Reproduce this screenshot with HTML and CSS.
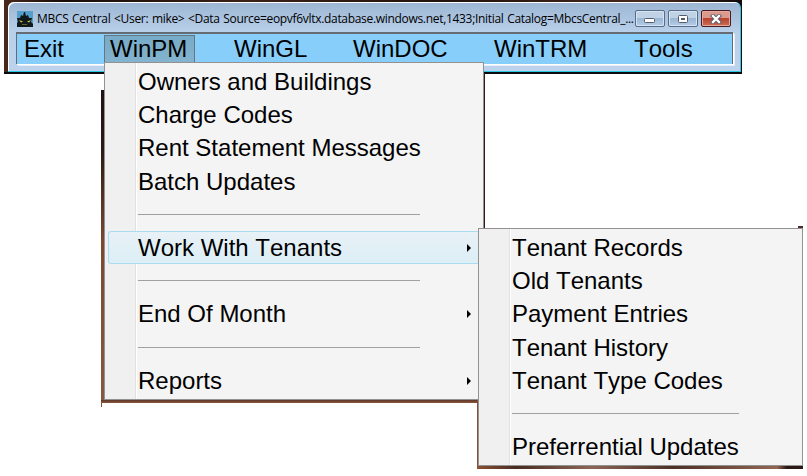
FILE: index.html
```html
<!DOCTYPE html>
<html lang="en">
<head>
<meta charset="utf-8">
<title>MBCS Central</title>
<link rel="stylesheet" href="styles.css">
</head>
<body>
<div class="backdrop">
  <div class="window">
    <header class="titlebar">
      <svg class="app-icon" width="16" height="16" viewBox="0 0 16 16">
        <rect width="16" height="16" fill="#559dca"/>
        <path d="M0 16V12l1-1-1-4 3 0 1-3 2 1 1-4h1l1 4 2-1 1 3 3 0-1 4 2 2v3z" fill="#10191c"/>
        <path d="M2 9l4 1.500-2 1zM14 9l-4 1.500 2 1z" fill="#d7c94b"/>
        <path d="M5 13.500h5" stroke="#61662f"/>
      </svg>
      <span class="title">MBCS Central &lt;User: mike&gt; &lt;Data Source=eopvf6vltx.database.windows.net,1433;Initial Catalog=MbcsCentral_...</span>
      <div class="controls">
        <span class="control"><svg class="minimize" width="12" height="6"><rect x=".5" y=".5" width="10" height="4" rx="1" fill="#fff" stroke="#555b6a"/></svg></span>
        <span class="control"><svg width="12" height="10"><rect x="1.500" y="1.500" width="9" height="7" rx="1" fill="#fff" stroke="#555b6a"/><rect x="4.500" y="4.500" width="3" height="1" fill="#9bb8d5" stroke="#555b6a"/></svg></span>
        <span class="control close"><svg width="12" height="10"><path d="M3 2l6 6M9 2l-6 6" stroke="#555b6a" stroke-width="4.200" stroke-linecap="square"/><path d="M3 2l6 6M9 2l-6 6" stroke="#fff" stroke-width="2.400" stroke-linecap="square"/></svg></span>
      </div>
    </header>
    <nav class="menubar">
      <span class="menu exit">Exit</span>
      <span class="menu open">WinPM</span>
      <span class="menu gl">WinGL</span>
      <span class="menu doc">WinDOC</span>
      <span class="menu trm">WinTRM</span>
      <span class="menu">Tools</span>
    </nav>
  </div>
</div>
<div class="edge edge-left"></div>
<div class="edge edge-foot"></div>
<div class="edge edge-bottom"></div>
<div class="edge edge-right"></div>
<div class="popup main">
  <div class="item">Owners and Buildings</div>
  <div class="item">Charge Codes</div>
  <div class="item">Rent Statement Messages</div>
  <div class="item">Batch Updates</div>
  <div class="sep"></div>
  <div class="item parent active">Work With Tenants</div>
  <div class="sep"></div>
  <div class="item parent">End Of Month</div>
  <div class="sep"></div>
  <div class="item parent">Reports</div>
</div>
<div class="edge edge-sub-left"></div>
<div class="edge edge-sub-bottom"></div>
<div class="edge edge-corner"></div>
<div class="popup sub">
  <div class="item">Tenant Records</div>
  <div class="item">Old Tenants</div>
  <div class="item">Payment Entries</div>
  <div class="item">Tenant History</div>
  <div class="item">Tenant Type Codes</div>
  <div class="sep"></div>
  <div class="item">Preferrential Updates</div>
</div>
</body>
</html>
```
FILE: styles.css
```css
* { box-sizing: border-box; }
body {
  margin: 0;
  width: 807px;
  height: 476px;
  overflow: hidden;
  position: relative;
  background: #fff;
  color: #000;
  font: 24px/33px "Liberation Sans", Arial, sans-serif;
  font-kerning: none;
  white-space: nowrap;
}
.backdrop {
  margin-left: 4px;
  width: 738px;
  height: 74px;
  padding: 2px 0 0 4px;
  background: linear-gradient(90deg, #49291d, #160c08 8%, #3b2116 33%, #20120c 60%, #49291d 88%, #100b0b);
  border-bottom: 2px solid #090b10;
}
.window {
  width: 733px;
  height: 70px;
  padding: 0 8px;
  border: solid #29c9e5;
  border-width: 0 1px 1px 0;
  border-radius: 6px 6px 0 0;
  box-shadow: inset 1px 1px #fff;
  background: linear-gradient(#9bb5d2, #b9d0ea 30px, #bdd3ed);
}
.titlebar {
  display: flex;
  align-items: center;
  height: 30px;
  padding-top: 4px;
}
.app-icon { flex: none; margin: 0 4px 0 1px; }
.title {
  width: 598px;
  font: 12px/18px "Open Sans", sans-serif;
  letter-spacing: -0.31px;
  word-spacing: 0.8px;
}
.controls { display: flex; gap: 3px; margin-top: -1px; }
.control {
  display: flex;
  align-items: center;
  justify-content: center;
  width: 30px;
  height: 17px;
  border: 1px solid #596b86;
  border-radius: 2px;
  box-shadow: inset 0 0 0 1px #d5e3f2;
  background: linear-gradient(#bfd2e6 50%, #9bb7d3 50%, #b4cde7);
}
.minimize { margin-top: 4px; }
.close {
  border-color: #461b21;
  box-shadow: inset 0 0 0 1px #e5a99f;
  background: linear-gradient(#dc9a8d 50%, #b94331 50%, #cb6d50);
}
.menubar {
  display: flex;
  width: 717px;
  height: 32px;
  padding: 1px 0 0 7px;
  background: #87cefa;
  border: 1px solid #666c74;
  border-width: 2px 1px 0 1px;
  box-shadow: 1px 1px #fff, 2px 2px #e6effa;
}
.menu { height: 28px; line-height: 27px; }
.exit { width: 80px; }
.open {
  width: 91px;
  padding-left: 5px;
  line-height: 25px;
  border: 1px solid #68747e;
  background: linear-gradient(#77abc9, #83b3ce);
}
.gl { width: 119px; margin-left: 39px; }
.doc { width: 141px; }
.trm { width: 140px; }
.popup {
  position: absolute;
  border: 1px solid #929292;
  padding: 2px 2px;
}
.main {
  left: 104px;
  top: 62px;
  width: 380px;
  height: 338px;
  background: linear-gradient(90deg, #f0f0f0 30px, #e1e1e1 30px 31px, #fff 31px 32px, #f4f4f4 32px);
}
.sub {
  left: 478px;
  top: 228px;
  width: 325px;
  height: 238px;
  background: linear-gradient(90deg, #f0f0f0 30px, #e1e1e1 30px 31px, #fff 31px 32px, #f4f4f4 32px);
}
.item {
  position: relative;
  height: 33.200px;
  padding-left: 31px;
  line-height: 33px;
}
.active {
  margin-left: 1px;
  margin-right: -2px;
  border: 1px solid #aadcf0;
  border-right: 0;
  border-radius: 3px 0 0 3px;
  padding-left: 29px;
  line-height: 31px;
  background: linear-gradient(#e8f1f6, #dceef6);
}
.parent::after {
  content: "";
  position: absolute;
  left: 360px;
  top: 13px;
  border: 4px solid transparent;
  border-left-color: #000;
  border-right: 0;
}
.active::after { top: 12px; left: 358px; }
.sep {
  height: 33.200px;
  display: flex;
  align-items: center;
  padding-left: 31px;
}
.sep::after {
  content: "";
  width: 282px;
  height: 1px;
  background: #a0a0a0;
}
.sub .sep::after { width: 227px; }
.edge { position: absolute; background: #805039; }
.edge-left { left: 101px; top: 90px; width: 3px; height: 313px; background: linear-gradient(#1e1112, #2c1a17 20%, #79482f 48%, #895840); }
.edge-foot { left: 101px; top: 403px; width: 1px; height: 4px; }
.edge-bottom { left: 101px; top: 400px; width: 377px; height: 3px; background: linear-gradient(#5b3628, #8a573d); }
.edge-right { left: 484px; top: 73px; width: 1px; height: 155px; background: #351d19; }
.edge-sub-left { left: 477px; top: 400px; width: 1px; height: 69px; }
.edge-sub-bottom { left: 477px; top: 466px; width: 326px; height: 3px; background: linear-gradient(90deg, #8a5035, #492c20 12%, #8b6656 35%, #4d3025 60%, #926652 92%, #2b1916 95%); }
.edge-corner { left: 798px; top: 226px; width: 5px; height: 2px; background: #4b2d28; }
```
